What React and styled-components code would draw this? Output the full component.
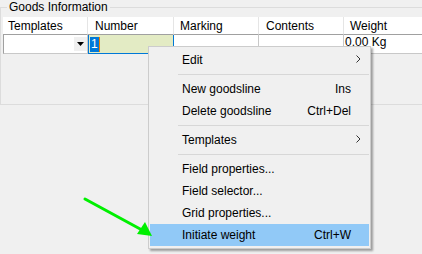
import React from "react";
import styled, { createGlobalStyle } from "styled-components";

const Global = createGlobalStyle`
  html, body { margin: 0; padding: 0; background: #f0f0f0; }
  body { font-family: "Liberation Sans", Arial, sans-serif; font-size: 12px; color: #000; }
  * { box-sizing: border-box; }
`;

const Frame = styled.div`
  position: relative;
  width: 422px;
  height: 254px;
  overflow: hidden;
  background: #f0f0f0;
`;

const Group = styled.fieldset`
  margin: 0;
  padding: 3px 0 0 2px;
  width: 440px;
  height: 105px;
  border: 1px solid #dcdcdc;
  min-width: 0;
`;

const Legend = styled.legend`
  margin-left: 4px;
  padding: 0 2px;
  line-height: 14px;
  font-size: 12px;
  color: #000;
`;

const Grid = styled.div`
  display: grid;
  grid-template-columns: 85px 86px 85px 85px 95px;
`;

const HeadCell = styled.div`
  height: 18px;
  background: #fff;
  border-right: 1px solid #e5e5e5;
  border-bottom: 1px solid #a0a0a0;
  padding-left: ${(p) => p.$pad || 5}px;
  line-height: 18px;
  white-space: nowrap;
  overflow: hidden;
`;

const Cell = styled.div`
  position: relative;
  height: 19px;
  background: ${(p) => (p.$active ? "#e3ebc4" : "#fff")};
  border-right: 1px solid ${(p) => (p.$active ? "#0078d7" : "#c8c8c8")};
  border-bottom: 1px solid ${(p) => (p.$active ? "#0078d7" : "#c8c8c8")};
  border-left: ${(p) => (p.$active ? "1px solid #0078d7" : p.$first ? "1px solid #a0a0a0" : "none")};
  display: flex;
  align-items: center;
  padding-left: ${(p) => p.$pad || 0}px;
  line-height: 14px;
  white-space: nowrap;
  overflow: hidden;
`;

const ComboBtn = styled.div`
  margin-left: auto;
  width: 13px;
  height: 14px;
  margin-right: 0;
  background: #f0f0f0;
  display: flex;
  align-items: center;
  justify-content: center;
`;

const Selected = styled.span`
  background: #0078d7;
  color: #fff;
  padding: 0 1px;
  border-right: 1px solid #f08000;
  line-height: 15px;
`;

const WeightText = styled.span`
  margin-top: -4px;
`;

const Menu = styled.div`
  position: absolute;
  left: 148px;
  top: 46px;
  width: 223px;
  padding: 2px 1px;
  background: #f0f0f0;
  border: 1px solid #cccccc;
  box-shadow: 2px 2px 2px rgba(0, 0, 0, 0.35);
`;

const Item = styled.div`
  display: grid;
  grid-template-columns: 1fr auto 18px;
  align-items: center;
  height: 22px;
  padding-left: 32px;
  background: ${(p) => (p.$hot ? "#91c9f7" : "transparent")};
  white-space: nowrap;
`;

const Shortcut = styled.span`
  text-align: right;
`;

const Sep = styled.div`
  height: 7px;
  display: flex;
  align-items: center;
  padding-left: 28px;
  &::after {
    content: "";
    flex: 1;
    height: 1px;
    background: #d7d7d7;
  }
`;

const Chevron = () => (
  <svg width="18" height="10" viewBox="0 0 18 10">
    <path d="M5.5 1.5 L9 5 L5.5 8.5" fill="none" stroke="#333" strokeWidth="1" />
  </svg>
);

const Arrow = styled.svg`
  position: absolute;
  left: 0;
  top: 0;
  pointer-events: none;
`;

const items = [
  { label: "Edit", sub: true },
  "sep",
  { label: "New goodsline", key: "Ins" },
  { label: "Delete goodsline", key: "Ctrl+Del" },
  "sep",
  { label: "Templates", sub: true },
  "sep",
  { label: "Field properties..." },
  { label: "Field selector..." },
  { label: "Grid properties..." },
  { label: "Initiate weight", key: "Ctrl+W", hot: true },
];

export default function App() {
  return (
    <Frame>
      <Global />
      <Group>
        <Legend>Goods Information</Legend>
        <Grid>
          <HeadCell $pad={5}>Templates</HeadCell>
          <HeadCell $pad={7}>Number</HeadCell>
          <HeadCell $pad={6}>Marking</HeadCell>
          <HeadCell $pad={7}>Contents</HeadCell>
          <HeadCell $pad={6}>Weight</HeadCell>
          <Cell $first>
            <ComboBtn>
              <svg width="7" height="4" viewBox="0 0 7 4">
                <path d="M0 0 H7 L3.5 4 Z" fill="#000" />
              </svg>
            </ComboBtn>
          </Cell>
          <Cell $active $pad={1}>
            <Selected>1</Selected>
          </Cell>
          <Cell />
          <Cell />
          <Cell $pad={1}>
            <WeightText>0.00 Kg</WeightText>
          </Cell>
        </Grid>
      </Group>
      <Menu>
        {items.map((it, i) =>
          it === "sep" ? (
            <Sep key={i} />
          ) : (
            <Item key={i} $hot={it.hot}>
              <span>{it.label}</span>
              <Shortcut>{it.key || ""}</Shortcut>
              <span>{it.sub ? <Chevron /> : null}</span>
            </Item>
          )
        )}
      </Menu>
      <Arrow width="422" height="254" viewBox="0 0 422 254">
        <line x1="85" y1="199" x2="142" y2="230" stroke="#00f000" strokeWidth="3" strokeLinecap="round" />
        <polygon points="152,236 137,234 145,222" fill="#00f000" />
      </Arrow>
    </Frame>
  );
}
